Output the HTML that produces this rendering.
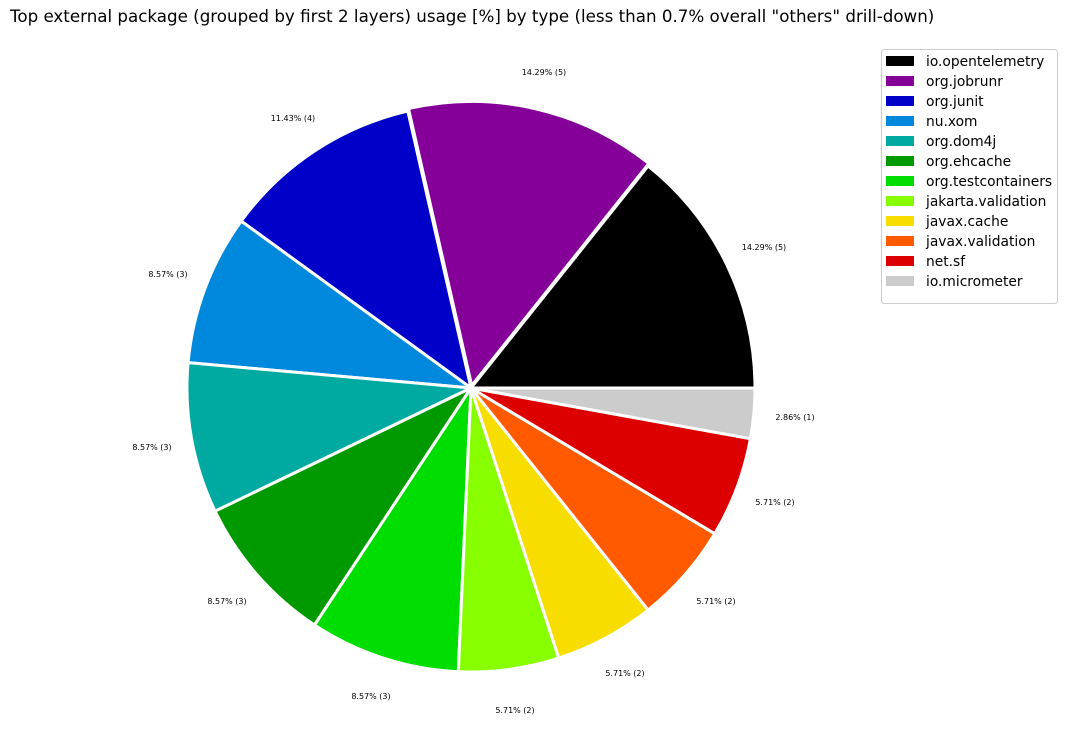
<!DOCTYPE html><html><head><style>body{margin:0;background:#fff;width:1067px;height:745px;overflow:hidden}</style></head><body>
<svg width="1067" height="745" xmlns="http://www.w3.org/2000/svg" font-family="DejaVu Sans, sans-serif">
<text x="10" y="22" font-size="16.7">Top external package (grouped by first 2 layers) usage [%] by type (less than 0.7% overall "others" drill-down)</text>
<g stroke="#fff" stroke-width="3" stroke-linejoin="round" transform="translate(0,1)">
<path d="M471,387 L755,387 A284,284 0 0 0 648.1,165 Z" fill="#000"/>
<path d="M471,387 L648.1,165 A284,284 0 0 0 407.8,110.1 Z" fill="#850098" transform="translate(0.7,-2.5)"/>
<path d="M471,387 L407.8,110.1 A284,284 0 0 0 241.2,220.1 Z" fill="#0000c8"/>
<path d="M471,387 L241.2,220.1 A284,284 0 0 0 188.1,361.6 Z" fill="#0088dd"/>
<path d="M471,387 L188.1,361.6 A284,284 0 0 0 215.1,510.2 Z" fill="#00aaa0"/>
<path d="M471,387 L215.1,510.2 A284,284 0 0 0 314.5,624 Z" fill="#009900"/>
<path d="M471,387 L314.5,624 A284,284 0 0 0 458.3,670.7 Z" fill="#00dd00"/>
<path d="M471,387 L458.3,670.7 A284,284 0 0 0 558.8,657.1 Z" fill="#88ff00"/>
<path d="M471,387 L558.8,657.1 A284,284 0 0 0 648.1,609 Z" fill="#f8dd00"/>
<path d="M471,387 L648.1,609 A284,284 0 0 0 714.8,532.7 Z" fill="#ff5a00"/>
<path d="M471,387 L714.8,532.7 A284,284 0 0 0 750.4,437.7 Z" fill="#dd0000"/>
<path d="M471,387 L750.4,437.7 A284,284 0 0 0 755,387 Z" fill="#cccccc"/>
</g>
<g font-size="8" text-anchor="middle">
<text x="764" y="250">14.29% (5)</text>
<text x="544" y="75">14.29% (5)</text>
<text x="293" y="121">11.43% (4)</text>
<text x="168" y="277">8.57% (3)</text>
<text x="152" y="450">8.57% (3)</text>
<text x="227" y="604">8.57% (3)</text>
<text x="371" y="699">8.57% (3)</text>
<text x="515" y="713">5.71% (2)</text>
<text x="625" y="676">5.71% (2)</text>
<text x="716" y="604">5.71% (2)</text>
<text x="775" y="505">5.71% (2)</text>
<text x="795" y="420">2.86% (1)</text>
</g>
<rect x="881.5" y="49.5" width="176" height="254" rx="3" fill="#fff" stroke="#ccc"/>
<g font-size="13.8">
<rect x="886" y="56" width="28" height="10" fill="#000"/><text x="926" y="66">io.opentelemetry</text>
<rect x="886" y="76" width="28" height="10" fill="#850098"/><text x="926" y="86">org.jobrunr</text>
<rect x="886" y="96" width="28" height="10" fill="#0000c8"/><text x="926" y="106">org.junit</text>
<rect x="886" y="116" width="28" height="10" fill="#0088dd"/><text x="926" y="126">nu.xom</text>
<rect x="886" y="136" width="28" height="10" fill="#00aaa0"/><text x="926" y="146">org.dom4j</text>
<rect x="886" y="156" width="28" height="10" fill="#009900"/><text x="926" y="166">org.ehcache</text>
<rect x="886" y="176" width="28" height="10" fill="#00dd00"/><text x="926" y="186">org.testcontainers</text>
<rect x="886" y="196" width="28" height="10" fill="#88ff00"/><text x="926" y="206">jakarta.validation</text>
<rect x="886" y="216" width="28" height="10" fill="#f8dd00"/><text x="926" y="226">javax.cache</text>
<rect x="886" y="236" width="28" height="10" fill="#ff5a00"/><text x="926" y="246">javax.validation</text>
<rect x="886" y="256" width="28" height="10" fill="#dd0000"/><text x="926" y="266">net.sf</text>
<rect x="886" y="276" width="28" height="10" fill="#cccccc"/><text x="926" y="286">io.micrometer</text>
</g>
</svg></body></html>
